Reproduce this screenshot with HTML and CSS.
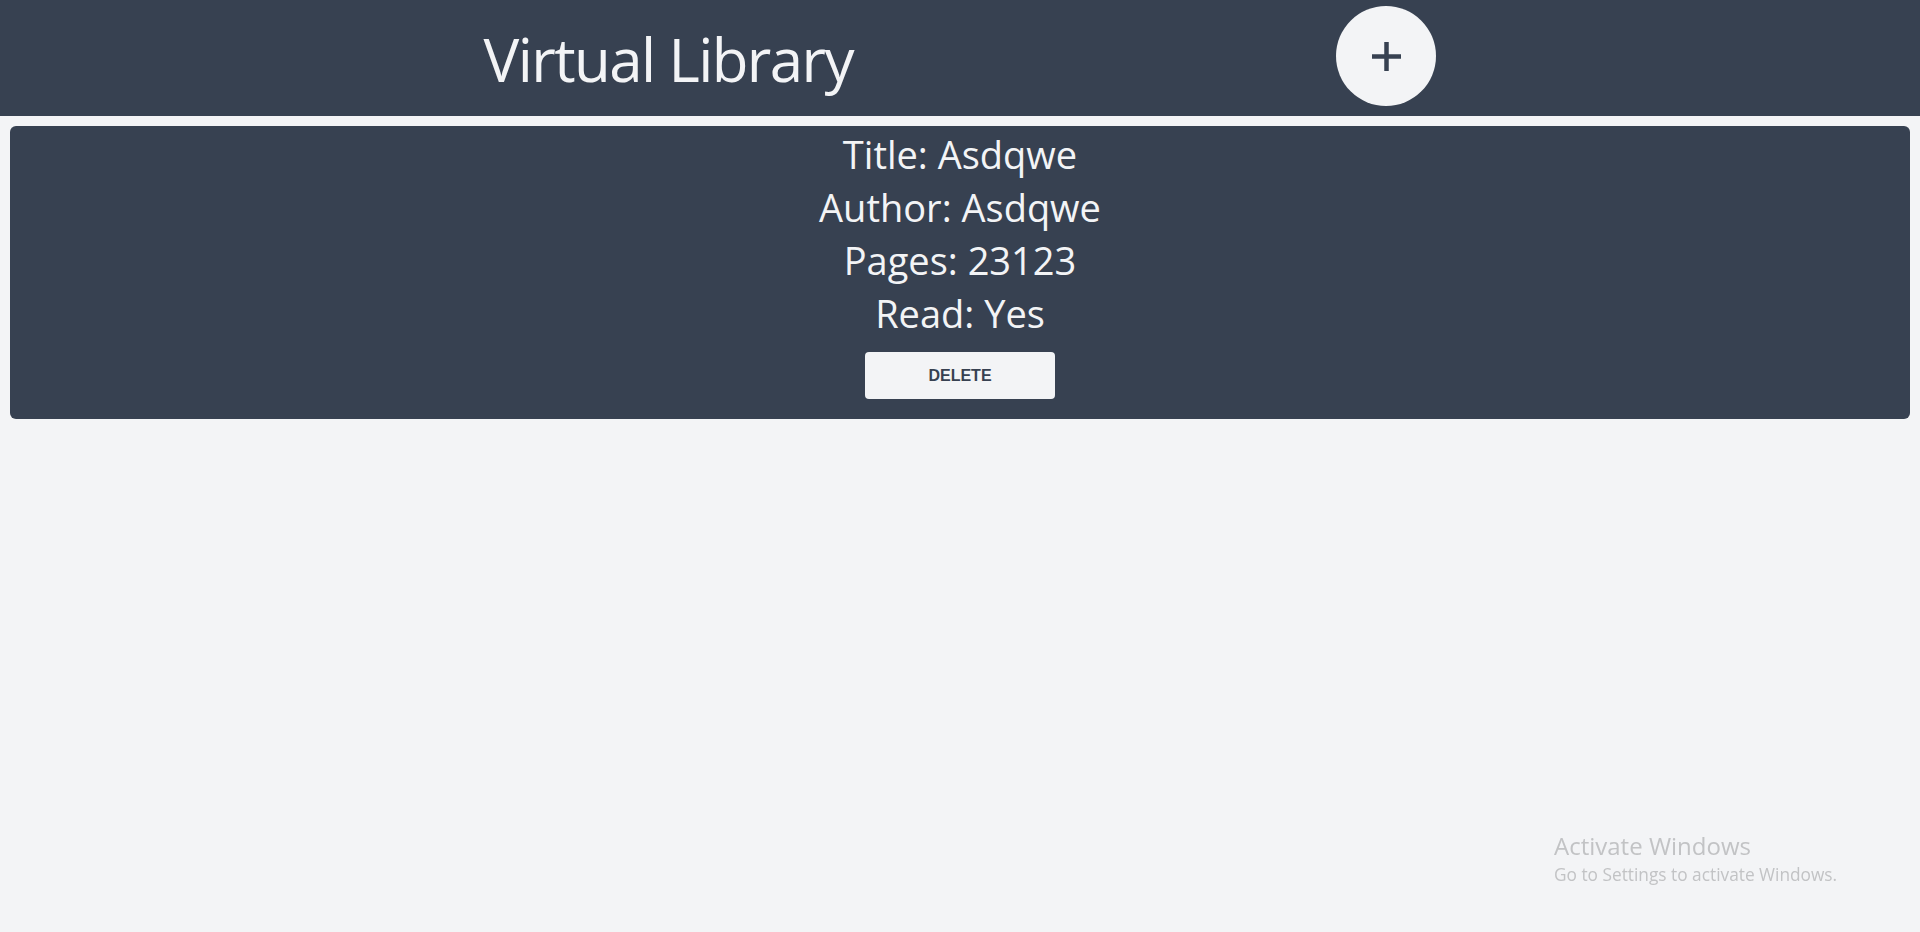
FILE: index.html
```html
<!DOCTYPE html>
<html lang="en">
<head>
<meta charset="utf-8">
<title>Virtual Library</title>
<link rel="stylesheet" href="styles.css">
</head>
<body>
<header class="header">
  <h1 class="title">Virtual Library</h1>
  <button class="add-btn" aria-label="Add book">
    <svg width="29" height="29" viewBox="0 0 29 29"><path d="M14.5 0V29M0 14.5H29" stroke="#374151" stroke-width="4.5" fill="none"/></svg>
  </button>
</header>
<main class="library">
  <div class="card">
    <p class="line">Title: Asdqwe</p>
    <p class="line">Author: Asdqwe</p>
    <p class="line">Pages: 23123</p>
    <p class="line">Read: Yes</p>
    <button class="delete-btn">DELETE</button>
  </div>
</main>
<div class="watermark">
  <div class="wm-title">Activate Windows</div>
  <div class="wm-sub">Go to Settings to activate Windows.</div>
</div>
</body>
</html>
```
FILE: styles.css
```css
html, body {
  margin: 0;
  padding: 0;
}
body {
  background: #f3f4f6;
  font-family: "Open Sans", "Noto Sans", sans-serif;
  min-height: 932px;
}
.header {
  height: 116px;
  box-sizing: border-box;
  background: #374151;
  display: flex;
  align-items: center;
  justify-content: space-evenly;
}
.title {
  margin: 0;
  padding-top: 2px;
  color: #f3f4f6;
  font-weight: 400;
  font-size: 60px;
  letter-spacing: -1.6px;
  line-height: 1;
}
.add-btn {
  width: 100px;
  height: 100px;
  border-radius: 50%;
  border: none;
  background: #f3f4f6;
  display: flex;
  align-items: center;
  justify-content: center;
  padding: 0;
  margin-top: -4px;
}
.library {
  padding: 10px;
}
.card {
  background: #374151;
  border-radius: 6px;
  display: flex;
  flex-direction: column;
  align-items: center;
  padding: 2px 0 20px;
  height: 293px;
  box-sizing: border-box;
}
.line {
  margin: 0;
  color: #f3f4f6;
  font-size: 38px;
  line-height: 53px;
}
.delete-btn {
  margin-top: 12px;
  width: 190px;
  height: 47px;
  border: none;
  border-radius: 4px;
  background: #f3f4f6;
  color: #374151;
  font-family: "Liberation Sans", Arial, sans-serif;
  font-weight: 700;
  font-size: 16px;
}
.watermark {
  position: fixed;
  left: 1554px;
  top: 831px;
  color: #c2c3c5;
  font-family: "Open Sans", sans-serif;
}
.wm-title {
  font-size: 24px;
  line-height: 30px;
}
.wm-sub {
  font-size: 17.3px;
  line-height: 28px;
}
```
